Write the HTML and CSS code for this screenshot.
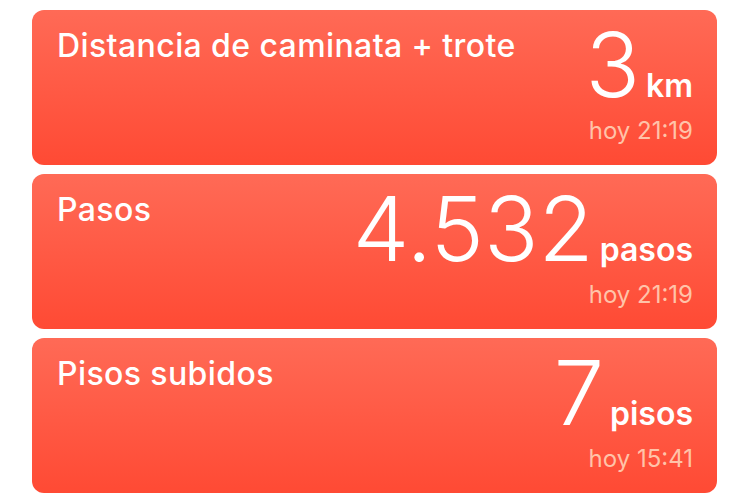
FILE: index.html
```html
<!DOCTYPE html>
<html lang="es">

<head>
    <meta charset="UTF-8">
    <meta name="viewport" content="width=device-width, initial-scale=1.0">
    <title>Actividad</title>
    <link rel="stylesheet" href="styles.css">
</head>

<body>
    <div class="list">
        <div class="card">
            <div class="label">Distancia de caminata + trote</div>
            <div class="reading">
                <div class="value"><span class="num">3</span><span class="unit">km</span></div>
                <div class="time">hoy 21:19</div>
            </div>
        </div>
        <div class="card">
            <div class="label">Pasos</div>
            <div class="reading">
                <div class="value"><span class="num">4.532</span><span class="unit">pasos</span></div>
                <div class="time">hoy 21:19</div>
            </div>
        </div>
        <div class="card">
            <div class="label">Pisos subidos</div>
            <div class="reading">
                <div class="value"><span class="num">7</span><span class="unit">pisos</span></div>
                <div class="time">hoy 15:41</div>
            </div>
        </div>
    </div>
</body>

</html>
```

FILE: styles.css
```css
* {
    margin: 0;
    padding: 0;
    box-sizing: border-box;
}

body {
    font-family: Inter, Roboto, sans-serif;
    background: #fff;
    color: #fff;
}

.list {
    display: flex;
    flex-direction: column;
    gap: 9px;
    padding: 10px 33px 0 32px;
}

.card {
    display: flex;
    justify-content: space-between;
    height: 155px;
    padding: 0 24px 0 25px;
    border-radius: 12px;
    background: linear-gradient(#ff6a56, #ff4a34);
}

.label {
    padding-top: 20px;
    font-size: 32px;
    font-weight: 500;
    letter-spacing: 0.4px;
    line-height: 1;
}

.reading {
    display: flex;
    flex-direction: column;
    align-items: flex-end;
    padding-top: 10px;
}

.value {
    line-height: 90px;
    height: 90px;
    white-space: nowrap;
}

.num {
    font-size: 90px;
    font-weight: 300;
    line-height: 1;
}

.unit {
    margin-left: 6px;
    font-size: 32px;
    font-weight: 600;
    line-height: 1;
}

.time {
    margin-top: 9px;
    font-size: 24px;
    font-weight: 400;
    line-height: 1;
    color: #ffc3a9;
}
```
